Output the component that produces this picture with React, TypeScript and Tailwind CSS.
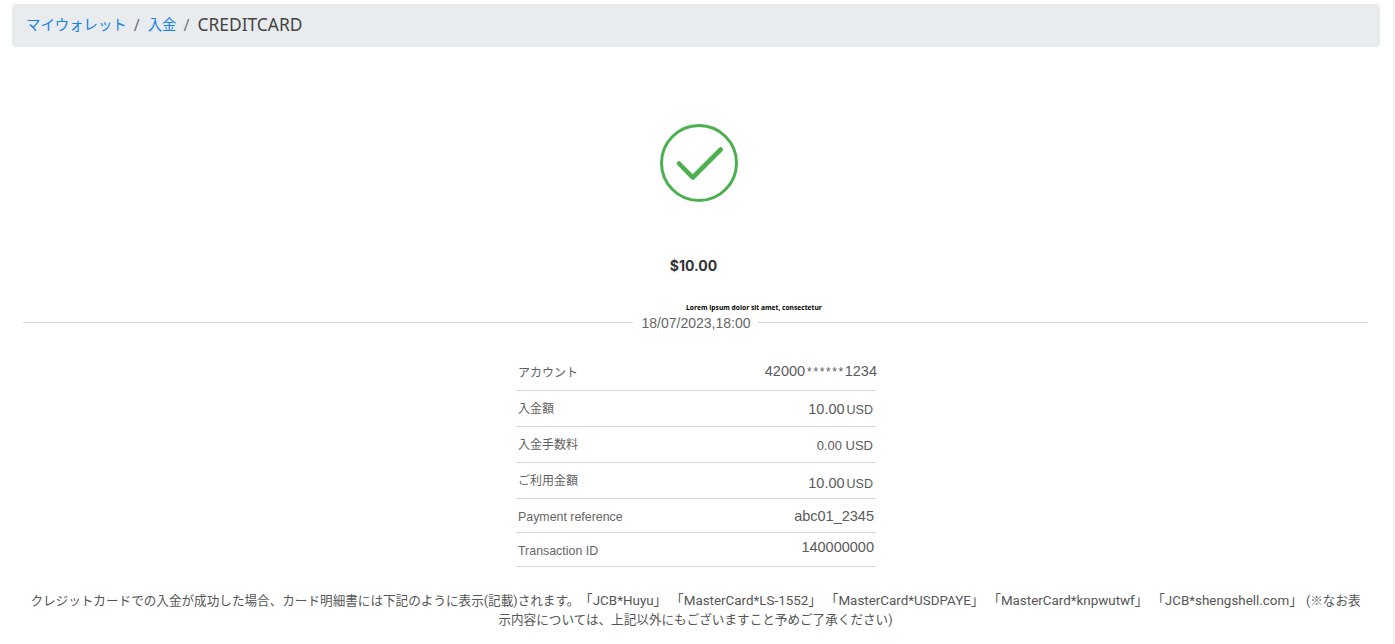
import React from "react";

function Row({ label, labelClass, children, h }: { label: string; labelClass: string; children: React.ReactNode; h: string }) {
  return (
    <div className={`flex justify-between items-center border-b border-[#d4d6d6] ${h}`}>
      <span className={labelClass}>{label}</span>
      {children}
    </div>
  );
}

export default function App() {
  const value = "text-[14.5px] text-[#5a5a5a] font-['Liberation_Sans','Noto_Sans_CJK_JP',sans-serif]";
  const label = "text-xs ml-0.5 pt-[1px] text-[#5f5f5f] font-['Liberation_Sans','Noto_Sans_CJK_JP',sans-serif]";
  const latinLabel = "text-[12.4px] ml-0.5 pt-[5px] text-[#666666] font-['Liberation_Sans',sans-serif]";
  return (
    <div className="min-h-[644px] bg-white font-['Roboto','Noto_Sans_CJK_JP',sans-serif] text-[#555555] overflow-hidden border-r border-[#eeeeee] w-[1394px]">
      <div className="px-3 pt-1">
        <nav className="flex items-center h-[43px] w-[1368px] rounded bg-[#e9ecef] px-3.5 pb-[2px] text-[14.4px] text-[#212529] font-['Noto_Sans','Noto_Sans_CJK_JP',sans-serif]">
          <a className="text-[#1580e6]">マイウォレット</a>
          <span className="pl-[7px] pr-[8px] text-[#6c757d] text-base">/</span>
          <a className="text-[#1580e6]">入金</a>
          <span className="pl-[7px] pr-[8px] text-[#6c757d] text-base">/</span>
          <span className="text-[#444444] text-[17.4px]">CREDITCARD</span>
        </nav>

        <div className="flex justify-center mt-[75.5px]">
          <svg width="80" height="80" viewBox="0 0 80 80" fill="none" className="ml-[4px]">
            <circle cx="40" cy="40" r="37.5" stroke="#4caf50" strokeWidth="3" />
            <path d="M20 40.5 L33.7 54.5 L61.7 26.5" stroke="#4caf50" strokeWidth="4.6" strokeLinecap="round" strokeLinejoin="round" />
          </svg>
        </div>

        <p className="mt-[53px] h-[19px] text-center text-sm leading-[19px] font-bold text-[#333333] font-['Inter',sans-serif] pr-[6px]">$10.00</p>

        <div className="mt-[27px] h-[12px] flex justify-center pl-[115px]">
          <span className="text-[6.7px] leading-[12px] font-bold text-black whitespace-nowrap font-['Open_Sans',sans-serif]">Lorem ipsum dolor sit amet, consectetur</span>
        </div>

        <div className="flex items-center mt-[-1px] ml-[11px] w-[1345px] h-[20px]">
          <div className="flex-1 h-px bg-[#d4d6d6]" />
          <span className="w-[125px] pl-[1px] text-center text-sm text-[#666666] font-['Liberation_Sans',sans-serif]">18/07/2023,18:00</span>
          <div className="flex-1 h-px bg-[#d4d6d6]" />
        </div>

        <div className="w-[360px] ml-[504px] mt-[22px]">
          <Row h="h-[36px]" label="アカウント" labelClass={label}>
            <span className={`${value} -mr-[1px]`}>42000<span className="text-xs tracking-[1.6px] ml-0.5">******</span>1234</span>
          </Row>
          <Row h="h-[36px]" label="入金額" labelClass={label}>
            <span className={`${value} pr-[3px] pt-[4px]`}>10.00<span className="text-[12.5px] ml-0.5">USD</span></span>
          </Row>
          <Row h="h-[36px]" label="入金手数料" labelClass={label}>
            <span className="text-[13px] text-[#5a5a5a] pr-[3px] pt-[4px] font-['Liberation_Sans',sans-serif]">0.00 USD</span>
          </Row>
          <Row h="h-[36px]" label="ご利用金額" labelClass={label}>
            <span className={`${value} pr-[3px] pt-[8px]`}>10.00<span className="text-[12.5px] ml-0.5">USD</span></span>
          </Row>
          <Row h="h-[34px]" label="Payment reference" labelClass={latinLabel}>
            <span className={`${value} pr-[2px] pt-[4px]`}>abc01_2345</span>
          </Row>
          <Row h="h-[34px]" label="Transaction ID" labelClass={latinLabel}>
            <span className={`${value} pr-[2px] pb-[2px]`}>140000000</span>
          </Row>
        </div>

        <p className="mt-[24px] w-[1345px] ml-[11px] text-center text-[13.4px] leading-[19px] text-[#555555] [text-spacing-trim:space-all]">
          <span className="text-[12.6px]">クレジットカードでの入金が成功した場合、カード明細書には下記のように表示(記載)されます。</span>「JCB*Huyu」 「MasterCard*LS-1552」 「MasterCard*USDPAYE」 「MasterCard*knpwutwf」 「JCB*shengshell.com」 <span className="text-[12.6px]">(※なお表</span>
          <br />
          <span className="text-[12.6px]">示内容については、上記以外にもございますこと予めご了承ください)</span>
        </p>
      </div>
    </div>
  );
}
